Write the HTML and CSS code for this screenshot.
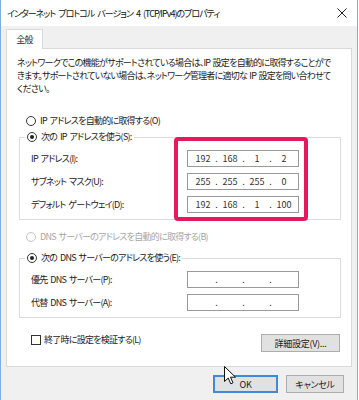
FILE: index.html
```html
<!DOCTYPE html>
<html lang="ja">
<head>
    <meta charset="UTF-8">
    <meta name="viewport" content="width=device-width, initial-scale=1.0">
    <title>インターネット プロトコル バージョン 4 (TCP/IPv4)のプロパティ</title>
    <link rel="stylesheet" href="styles.css">
</head>
<body>
    <div class="window">
        <div class="titlebar">
            <span class="title">インターネット プロトコル バージョン 4 (TCP/IPv4)のプロパティ</span>
            <svg class="close" width="10" height="10" viewBox="0 0 10 10">
                <path d="M0.5 0.5 L9.5 9.5 M9.5 0.5 L0.5 9.5" stroke="#222" stroke-width="1" fill="none"/>
            </svg>
        </div>

        <div class="frame">
            <div class="tabs">
                <div class="tab">全般</div>
            </div>

            <div class="panel">
                <p class="intro">
                    ネットワークでこの機能がサポートされている場合は、IP 設定を自動的に取得することがで<br>
                    きます。サポートされていない場合は、ネットワーク管理者に適切な IP 設定を問い合わせて<br>
                    ください。
                </p>

                <div class="option"><span class="radio"></span>IP アドレスを自動的に取得する(O)</div>

                <fieldset class="group">
                    <legend class="option"><span class="radio checked"></span>次の IP アドレスを使う(S):</legend>
                    <div class="fields">
                        <div class="labels">
                            <span>IP アドレス(I):</span>
                            <span>サブネット マスク(U):</span>
                            <span>デフォルト ゲートウェイ(D):</span>
                        </div>
                        <div class="inputs highlight">
                            <div class="ip"><span>192</span><i>.</i><span>168</span><i>.</i><span>1</span><i>.</i><span>2</span></div>
                            <div class="ip"><span>255</span><i>.</i><span>255</span><i>.</i><span>255</span><i>.</i><span>0</span></div>
                            <div class="ip"><span>192</span><i>.</i><span>168</span><i>.</i><span>1</span><i>.</i><span>100</span></div>
                        </div>
                    </div>
                </fieldset>

                <div class="option disabled dns-auto"><span class="radio"></span>DNS サーバーのアドレスを自動的に取得する(B)</div>

                <fieldset class="group">
                    <legend class="option"><span class="radio checked"></span>次の DNS サーバーのアドレスを使う(E):</legend>
                    <div class="fields">
                        <div class="labels">
                            <span>優先 DNS サーバー(P):</span>
                            <span>代替 DNS サーバー(A):</span>
                        </div>
                        <div class="inputs">
                            <div class="ip"><span></span><i>.</i><span></span><i>.</i><span></span><i>.</i><span></span></div>
                            <div class="ip"><span></span><i>.</i><span></span><i>.</i><span></span><i>.</i><span></span></div>
                        </div>
                    </div>
                </fieldset>

                <div class="panel-footer">
                    <div class="check-row"><span class="checkbox"></span>終了時に設定を検証する(L)</div>
                    <button class="btn advanced">詳細設定(V)...</button>
                </div>
            </div>

            <div class="actions">
                <button class="btn ok">OK</button>
                <button class="btn cancel">キャンセル</button>
            </div>
        </div>

        <svg class="cursor" width="13" height="19" viewBox="0 0 13 19">
            <path d="M0.5 0.5 L0.5 15.5 L4.2 12 L6.8 17.8 L9 16.8 L6.5 11.2 L11.5 11.2 Z" fill="#fff" stroke="#111" stroke-width="1"/>
        </svg>
    </div>
</body>
</html>
```

FILE: styles.css
```css
:root {
    --bg: #f0f0f0;
    --panel-border: #d9d9d9;
    --group-border: #dcdcdc;
    --input-border: #9a9a9a;
    --text: #1a1a1a;
    --muted: #a6a6a6;
    --accent: #e6185e;
    --win-border: #7eb0de;
}

* {
    margin: 0;
    padding: 0;
    box-sizing: border-box;
}

body {
    background: #fff;
    font-family: "Noto Sans CJK JP", "Noto Sans", sans-serif;
    font-feature-settings: "palt";
    font-size: 9px;
    letter-spacing: -0.75px;
    word-spacing: 1.5px;
    color: var(--text);
}

.window {
    position: relative;
    width: 358px;
    height: 400px;
    border-left: 1px solid var(--win-border);
    border-right: 1px solid var(--win-border);
    background: var(--bg);
    overflow: hidden;
}

.titlebar {
    height: 26px;
    background: #fff;
    display: flex;
    align-items: center;
    justify-content: space-between;
    padding: 0 10px 0 6px;
}

.title {
    font-size: 9px;
    letter-spacing: -1px;
    word-spacing: 2px;
    color: #111;
}

.frame {
    padding: 3px 5px 0 5px;
}

.tabs {
    display: flex;
    height: 19px;
}

.tab {
    width: 37px;
    height: 20px;
    background: #fff;
    border: 1px solid var(--panel-border);
    border-bottom: none;
    display: flex;
    align-items: center;
    justify-content: center;
    position: relative;
    z-index: 1;
}

.panel {
    height: 319px;
    background: #fff;
    border: 1px solid var(--panel-border);
    padding-top: 7px;
}

.intro {
    padding-left: 10px;
    line-height: 13px;
    white-space: nowrap;
    word-spacing: 1px;
}

.option {
    display: flex;
    align-items: center;
    line-height: 14px;
    gap: 4px;
}

.panel > .option {
    margin: 19px 0 0 19px;
}

.panel > .dns-auto {
    margin-top: 10px;
}

.disabled {
    color: var(--muted);
}

.radio {
    width: 10px;
    height: 10px;
    border: 1px solid #333;
    border-radius: 50%;
    background: #fff;
    display: inline-flex;
    align-items: center;
    justify-content: center;
}

.radio.checked::after {
    content: '';
    width: 4px;
    height: 4px;
    border-radius: 50%;
    background: #222;
}

.disabled .radio {
    border-color: #c4c4c4;
}

.group {
    margin: 2px 0 0 12px;
    width: 322px;
    border: 1px solid var(--group-border);
    padding: 0 0 0 11px;
}

.dns-auto + .group {
    margin-top: 7px;
}

.group legend {
    margin-left: -6px;
    padding: 0 2px;
}

.fields {
    display: flex;
    margin: -7px 0 -2px 0;
}

.labels {
    width: 143px;
    display: flex;
    flex-direction: column;
    gap: 6px;
    padding-top: 13px;
}

.labels span {
    line-height: 17px;
}

.inputs {
    display: flex;
    flex-direction: column;
    gap: 6px;
    border: 4px solid transparent;
    padding: 9px 5px 4px 9px;
}

.highlight {
    border-color: var(--accent);
    border-radius: 4px;
}

.ip {
    width: 112px;
    height: 17px;
    border: 1px solid var(--input-border);
    background: #fff;
    display: flex;
    align-items: center;
    padding-left: 4px;
    color: #333;
    letter-spacing: 0;
}

.ip span {
    width: 22px;
    text-align: center;
}

.ip i {
    width: 5px;
    font-style: normal;
    text-align: center;
}

.panel-footer {
    display: flex;
    justify-content: space-between;
    align-items: flex-start;
    margin: 16px 11px 0 24px;
}

.check-row {
    display: flex;
    align-items: center;
    gap: 3px;
    line-height: 14px;
    margin-top: -1px;
}

.checkbox {
    width: 10px;
    height: 10px;
    border: 1px solid #333;
    background: #fff;
}

.btn {
    font-family: inherit;
    font-feature-settings: "palt";
    font-size: 9px;
    letter-spacing: -0.3px;
    color: var(--text);
    background: #e1e1e1;
    border: 1px solid #adadad;
    height: 18px;
}

.advanced {
    width: 79px;
}

.actions {
    display: flex;
    justify-content: flex-end;
    gap: 8px;
    padding: 8px 8px 0 0;
}

.ok {
    width: 65px;
    border: 2px solid #3c8ad8;
}

.cancel {
    width: 58px;
}

.cursor {
    position: absolute;
    left: 223px;
    top: 366px;
}
```
